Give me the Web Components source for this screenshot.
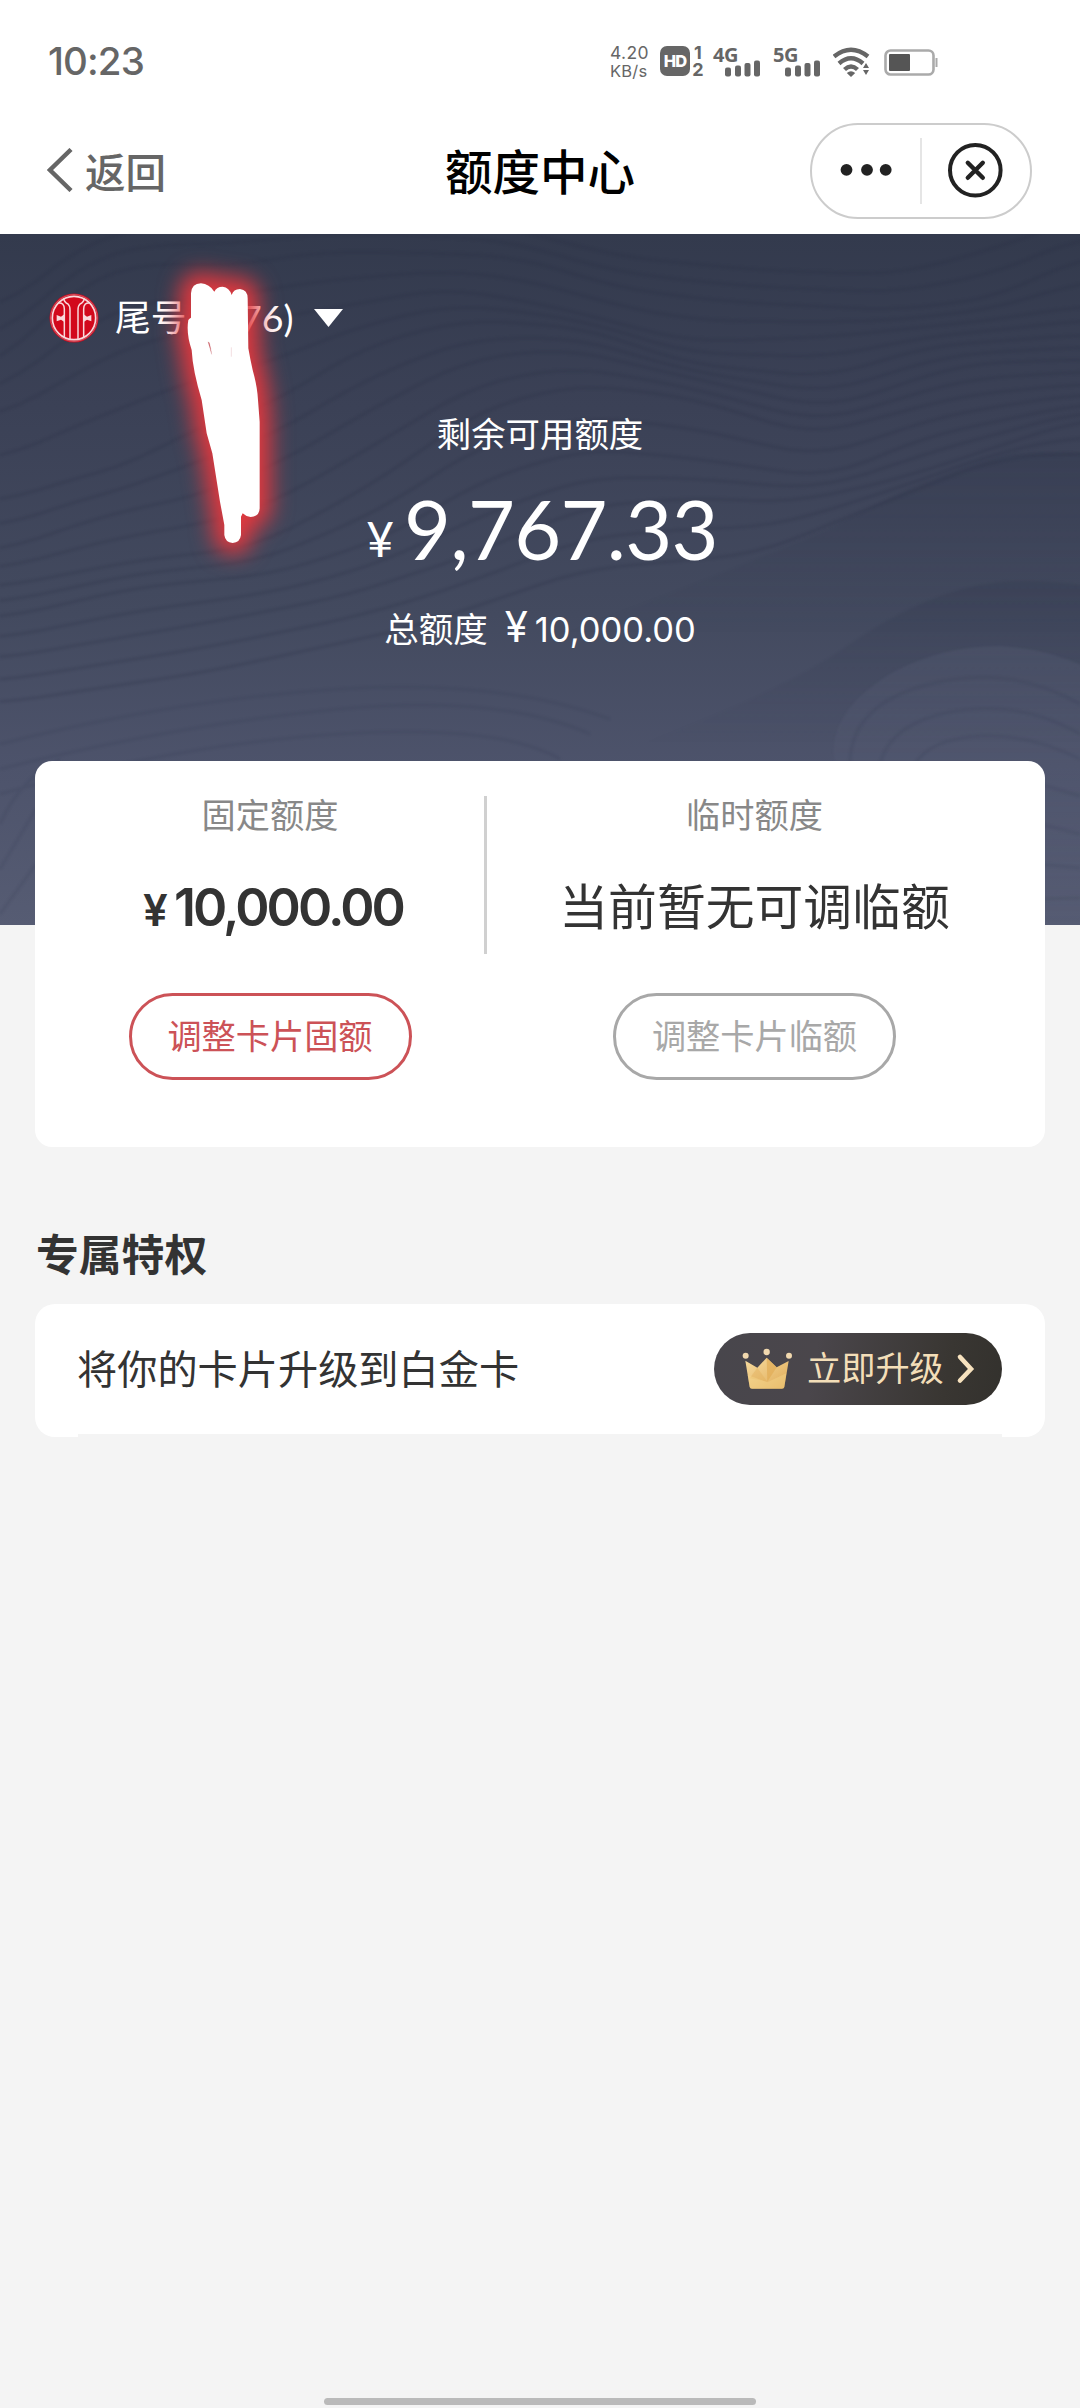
<!DOCTYPE html>
<html lang="zh-CN">
<head>
<meta charset="utf-8">
<meta name="viewport" content="width=device-width">
<title>额度中心</title>
<style>
html,body{margin:0;padding:0}
body{width:1080px;height:2408px;overflow:hidden;background:#f4f4f4;font-family:Inter,"Noto Sans CJK SC",sans-serif;color:#333}
</style>
</head>
<body>
<credit-page></credit-page>
<script>
const define=(name,html,setup)=>customElements.define(name,class extends HTMLElement{
  constructor(){super();this.attachShadow({mode:'open'}).innerHTML=html;}
  connectedCallback(){if(setup)setup(this.shadowRoot,this);}
});

define('signal-bars',`<style>
:host{display:block;width:48px;height:32px}
.g{font:700 20px/18px "Noto Sans",sans-serif;letter-spacing:-.5px;height:16px;color:#666}
svg{display:block;margin-left:12px;margin-top:-2px}
</style><div class="g"><slot></slot></div>
<svg width="36" height="17"><g fill="#666"><rect x="0" y="7.500" width="6" height="9" rx="2"/><rect x="10" y="5.500" width="6" height="11" rx="2"/><rect x="19.500" y="3" width="6" height="13.500" rx="2"/><rect x="29" y=".5" width="6" height="16" rx="2"/></g></svg>`);

define('status-bar',`<style>
:host{display:flex;height:108px;align-items:flex-start;color:#666;box-sizing:border-box;padding:44px 0 0 48px}
.time{font:500 38.500px/34px Inter;letter-spacing:-.9px;width:562px}
.rate{width:50px;font:400 17.500px/18px Inter}
.rate span{display:block;white-space:nowrap}
.rate .a{letter-spacing:.35px}.rate .b{font-size:16.500px;letter-spacing:.2px}
.hd{width:30px;height:30px;border-radius:7px;background:#666;color:#fff;font:800 16.500px/30px Inter;text-align:center;margin-top:2px;letter-spacing:-.8px}
.sim{width:12px;margin:0 9px 0 2px;font:700 18px/17px Inter;text-align:center}
signal-bars{margin-right:12px;margin-top:2px}
.wifi{margin-top:3px}
.bat{margin:5px 0 0 13px}
</style>
<div class="time">10:23</div>
<div class="rate"><span class="a">4.20</span><span class="b">KB/s</span></div>
<div class="hd">HD</div><div class="sim">1<br>2</div>
<signal-bars>4G</signal-bars><signal-bars>5G</signal-bars>
<svg class="wifi" width="38" height="30" viewBox="0 0 38 30"><g fill="none" stroke="#666" stroke-width="4.400"><path d="M1 9.500Q18 -4 35 9.500"/><path d="M6 16.500Q18 6 30 16.500"/><path d="M11.500 22.500Q18 16.500 24.500 22.500"/></g><path fill="#666" d="M13.800 26Q18 22.500 22.200 26L18 30zM30 21l3-5 3 5zM30 23h6l-3 5z"/></svg>
<svg class="bat" width="55" height="27" viewBox="0 0 55 27"><rect x="1.500" y="1.500" width="48" height="24" rx="5" fill="none" stroke="#aaa" stroke-width="2.600"/><rect x="5" y="5" width="21" height="17" rx="1" fill="#555"/><path d="M52.500 9v9" stroke="#aaa" stroke-width="2"/></svg>`);

define('nav-bar',`<style>
:host{display:grid;grid-template-columns:1fr auto 1fr;height:126px;align-items:start}
.back{display:flex;align-items:center;height:50px;padding:37px 0 0 47px;font-size:40.500px;line-height:50px;color:#666;font-weight:500}
.back svg{margin-right:12px}
.back span{margin-top:7px}
h1{margin:37px 0 0;font-size:47.500px;line-height:56px;font-weight:500;color:#000}
.cap{justify-self:end;box-sizing:border-box;width:222px;height:96px;border:2px solid #ccc;border-radius:48px;margin:15px 48px 0 0}
</style>
<div class="back"><svg width="26" height="44" viewBox="0 0 26 44"><path d="M24 1.500L3 22 24 42.500" fill="none" stroke="#666" stroke-width="4.400"/></svg><span>返回</span></div>
<h1>额度中心</h1>
<div class="cap"><svg width="218" height="92" viewBox="812 125 218 92"><g fill="#222"><circle cx="846.500" cy="169.800" r="5.900"/><circle cx="867" cy="169.800" r="5.900"/><circle cx="885.700" cy="169.800" r="5.900"/></g><path d="M921 138v66" stroke="#e5e5e5" stroke-width="2"/><circle cx="975.300" cy="170.300" r="25.300" fill="none" stroke="#222" stroke-width="4"/><path d="M967.800 162.800l15 15m0-15l-15 15" stroke="#222" stroke-width="4.400" stroke-linecap="round"/></svg></div>`);

// Contour texture: rows of [x,y] knots; extra contours are interpolated between neighbours.
const contours=[
 [[0,180],[130,20],[230,-10],[450,-30],[700,-20],[900,60],[1100,90],[1300,100],[1450,40],[1568,-30]],
 [[0,310],[60,200],[130,110],[200,75],[350,80],[450,50],[600,50],[750,60],[900,130],[1050,160],[1300,180],[1450,150],[1568,60]],
 [[0,420],[100,330],[200,250],[350,210],[500,170],[650,130],[800,170],[1000,250],[1200,240],[1450,200],[1568,170]],
 [[0,610],[100,560],[200,520],[270,450],[400,390],[450,330],[550,250],[680,200],[850,220],[1000,300],[1200,330],[1350,260],[1568,235]],
 [[0,720],[150,640],[300,590],[420,510],[540,400],[680,290],[820,265],[1000,330],[1200,400],[1400,300],[1568,290]],
 [[0,800],[200,740],[370,710],[530,580],[700,400],[840,345],[1000,375],[1180,460],[1400,370],[1568,345]],
 [[0,870],[200,800],[400,770],[560,690],[700,560],[850,490],[1000,510],[1200,555],[1350,460],[1568,390]],
 [[0,960],[300,880],[500,820],[680,730],[850,620],[1000,600],[1150,610],[1300,560],[1568,425]],
 [[0,1060],[300,990],[600,890],[850,760],[1100,725],[1300,600],[1450,510],[1568,500]]
];
const at=(k,x)=>{let i=1;while(i<k.length-1&&k[i][0]<x)i++;const[a,b]=[k[i-1],k[i]];return a[1]+(b[1]-a[1])*(x-a[0])/(b[0]-a[0]);};
const row=k=>{const r=[];for(let x=0;x<=1596;x+=28){let s=0;for(let d=-3;d<=3;d++)s+=at(k,Math.min(1568,Math.max(0,x+d*18)));r.push(s/7);}return r;};
const line=r=>'M'+r.map((y,i)=>(i*28/1.452).toFixed(1)+' '+(y/2.24-4).toFixed(1)).join('L');

define('contour-field',`<style>:host{display:block;position:absolute;inset:0}svg{display:block}</style>
<svg width="1080" height="691"><defs>
<filter id="f" x="-5%" y="-5%" width="110%" height="110%" color-interpolation-filters="sRGB"><feGaussianBlur stdDeviation="1.300"/></filter>
<linearGradient id="s" x1="0" y1="0" x2="0" y2="1"><stop offset="0" stop-color="#2c3348" stop-opacity=".2"/><stop offset="1" stop-color="#2c3348" stop-opacity="0"/></linearGradient>
<linearGradient id="k" x1="0" y1="0" x2="0" y2="1"><stop offset="0" stop-color="#666c84" stop-opacity=".2"/><stop offset="1" stop-color="#666c84" stop-opacity="0"/></linearGradient></defs>
<path filter="url(#f)" fill="url(#s)" d="M560 400Q700 350 830 295Q930 240 1000 222Q1040 215 1090 220V400Z"/>
<path filter="url(#f)" fill="url(#s)" d="M640 510Q780 460 850 410Q930 355 1000 348Q1040 345 1090 352V510Z"/>
<g id="l" filter="url(#f)" fill="none" stroke="#252c40" stroke-opacity=".18" stroke-width="3.400"></g>
<path filter="url(#f)" fill="url(#k)" d="M835 530Q825 480 890 440Q940 412 1000 412Q1050 415 1090 435V691H960Z"/>
<g filter="url(#f)" fill="none" stroke="#2b3248" stroke-opacity=".12" stroke-width="3"><path d="M850 530Q850 470 930 450Q1010 430 1080 470M880 530Q890 490 950 478Q1020 465 1080 500M915 530Q930 505 980 502Q1030 500 1080 525M1040 550L1080 562M1040 590L1080 600M1040 630L1080 634M1040 665L1080 664M0 510Q180 465 340 455T610 485M0 535Q180 490 340 475T590 500M0 560Q180 510 340 500T560 525M0 590Q20 545 60 525M0 635L36 575M0 680L36 630"/></g>
</svg>`,root=>{
  const g=root.getElementById('l'),rows=contours.map(row);let d='';
  rows.forEach((r,i)=>{d+=line(r);const n=rows[i+1];if(n)d+=line(r.map((y,j)=>y+(n[j]-y)*.5));});
  g.innerHTML='<path d="'+d+'"/>';
});

define('bank-logo',`<style>:host{display:block;width:50px;height:50px}svg{display:block}</style>
<svg width="50" height="50" viewBox="86 160 150 150"><circle cx="161" cy="235" r="73.500" fill="#c60b1e"/><circle cx="161" cy="235" r="70" fill="none" stroke="#eaa5ac" stroke-width="1.500"/><circle cx="161" cy="235" r="65" fill="#d2091c" stroke="#f9d9dc" stroke-width="5"/>
<g fill="none" stroke="#f9d9dc" stroke-width="4.500"><path d="M130 176Q132 188 143 193Q149 198 149 212V299M192 176Q190 188 179 193Q173 198 173 212V299"/><path d="M114 190Q132 188 132 208V293M208 190Q190 188 190 208V293"/></g><path d="M132 224L122 231 109 226V245L122 240 132 247ZM190 224L200 231 213 226V245L200 240 190 247Z" fill="#f9d9dc"/></svg>`);

define('ink-stroke',`<style>:host{display:block;position:absolute;left:0;top:0}svg{display:block}</style>
<svg width="420" height="400"><defs><filter id="b" x="-100%" y="-30%" width="300%" height="160%" color-interpolation-filters="sRGB"><feGaussianBlur stdDeviation="32"/></filter>
<path id="p" d="M513 160Q515 130 543 130Q568 132 583 155Q590 140 608 140Q628 142 635 165Q640 147 660 147Q683 150 683 175L685 325Q691 360 698 390Q712 440 714 480L719 545V805Q718 830 692 831Q678 830 668 820L663 830V885Q660 908 638 909Q616 908 613 885V855L600 785L577 640L560 580L545 480Q518 390 515 330Q498 280 505 240Q508 235 513 233Z"/></defs>
<g transform="translate(20 6) scale(.33333)"><use href="#p" fill="#e0383e" stroke="#e0383e" stroke-width="68" stroke-linejoin="round" filter="url(#b)"/><use href="#p" fill="#fff"/><path d="M564 305Q570 324 575 343Q572 322 568 308M634 322V350" fill="#c33a41" stroke="#d99ca0" stroke-width="1"/></g></svg>`);

define('quota-hero',`<style>
:host{display:block;position:relative;height:691px;margin-bottom:-164px;color:#fff;background:linear-gradient(#333a4d,#3b4156 25%,#434a5f 55%,#4d536b 77%,#565c73)}
.in{position:relative;display:flex;flex-direction:column;align-items:center}
.acct{display:flex;align-self:stretch;align-items:center;height:50px;padding:59px 0 0 49px;font:400 35.800px/50px Lato,"Noto Sans CJK SC",sans-serif}
.acct bank-logo{margin-right:16px}
.acct .n{margin-left:33px;width:74px;font:400 37.500px/50px Lato;text-align:right;margin-right:20px}
.lab{font-size:34.400px;line-height:50px;margin-top:67px}
.amt{display:flex;align-items:baseline;margin-top:25px;padding-left:4px;height:88px;line-height:88px;font-family:Lato}
.amt .y{font-size:48px;margin-right:10px;align-self:center;line-height:50px;margin-top:20px}.amt .v{font-size:81px;letter-spacing:-.7px}
.tot{display:flex;align-items:baseline;font-size:34.500px;line-height:50px;margin-top:32px}
.tot .y{font-size:42px;margin:0 7px 0 17px;line-height:40px}
.tot .v{letter-spacing:0}
</style>
<contour-field></contour-field>
<div class="in">
<div class="acct"><bank-logo></bank-logo><span>尾号</span><span class="n">76)</span><svg width="29" height="18"><path d="M0 0H29L14.500 18Z" fill="#fff"/></svg></div>
<div class="lab">剩余可用额度</div>
<div class="amt"><span class="y">¥</span><span class="v">9,767.33</span></div>
<div class="tot"><span>总额度</span><span class="y">¥</span><span class="v">10,000.00</span></div>
</div>
<ink-stroke></ink-stroke>`);

define('pill-button',`<style>
:host{display:block;box-sizing:border-box;width:283px;height:87px;border:3px solid currentColor;border-radius:44px;color:#cc5257;font-size:34.200px;line-height:82px;text-align:center}
:host([disabled]){color:#a8a8a8}
</style><slot></slot>`);

define('quota-column',`<style>
:host{display:flex;flex-direction:column;align-items:center}
.l{font-size:34.200px;line-height:50px;color:#888;margin-top:30px}
.v{margin-top:31px;height:72px;line-height:72px;font-size:48.800px;color:#333;white-space:nowrap}
</style><div class="l"><slot name="label"></slot></div><div class="v"><slot name="value"></slot></div><slot name="action"></slot>`);

define('quota-card',`<style>
:host{position:relative;display:flex;height:386px;margin:0 35px;border-radius:17px;background:#fff}
.a{width:449px;padding-left:21px;box-sizing:border-box}
hr{margin:35px 0 0;border:0;width:3px;height:158px;background:#d0d0d0}
.b{flex:1;padding-right:23px}
.m{font-weight:600;font-size:52px;letter-spacing:-2.900px;padding-left:6px}
.m i{font-style:normal;font-size:44px;margin-right:9px}
pill-button{margin-top:49px}
</style>
<quota-column class="a"><span slot="label">固定额度</span><span slot="value" class="m"><i>¥</i>10,000.00</span><pill-button slot="action">调整卡片固额</pill-button></quota-column>
<hr>
<quota-column class="b"><span slot="label">临时额度</span><span slot="value">当前暂无可调临额</span><pill-button slot="action" disabled>调整卡片临额</pill-button></quota-column>`);

define('upgrade-button',`<style>
:host{display:flex;align-items:center;box-sizing:border-box;width:288px;height:72px;border-radius:36px;padding-left:28px;background:linear-gradient(100deg,#48464c,#4a464b 35%,#393632 80%,#33312d);color:#f3deb8;font-size:34.200px;line-height:72px}
.t{margin:0 12px 0 14px}
</style><svg width="51" height="42" viewBox="186 139 153 126"><defs><linearGradient id="g" x1="0" y1="0" x2="1" y2="1"><stop offset="0" stop-color="#f7dca0"/><stop offset="1" stop-color="#dfaa55"/></linearGradient></defs><path fill="url(#g)" d="M196 177L232 198 260 168 290 197 326 178 313 256Q312 261 306 261H216Q210 261 209 256Z"/><path d="M260 168L290 197 262 240Z" fill="#dfa950" opacity=".6"/><path d="M232 198L262 240 209 230Z" fill="#e0ad58" opacity=".4"/><path d="M203 220L262 242 319 215 313 256Q312 261 306 261H216Q210 261 209 256Z" fill="#f7d98f" opacity=".4"/><g fill="#f1d8ae"><circle cx="197" cy="162" r="9"/><circle cx="260" cy="151" r="9.500"/><circle cx="327" cy="162" r="9"/></g></svg><span class="t"><slot></slot></span><svg width="20" height="32" viewBox="0 0 20 32"><path d="M4 4L15 16 4 27.500" fill="none" stroke="#f7e2be" stroke-width="4.600" stroke-linecap="round"/></svg>`);

define('privilege-section',`<style>
:host{display:block;margin:79px 35px 0}
h2{margin:0 0 0 1px;font-size:42.800px;line-height:60px;height:78px;font-weight:700;color:#333}
.c{display:flex;flex-direction:column;height:133px;border-radius:20px;background:#fff;padding:0 43px}
.r{display:flex;height:130px;align-items:center;justify-content:space-between;font-size:40.200px}
.r span{margin-top:-6px;margin-left:-1px}
.u{height:3px;background:#f4f4f4}
</style><h2>专属特权</h2><div class="c"><div class="r"><span>将你的卡片升级到白金卡</span><upgrade-button>立即升级</upgrade-button></div><div class="u"></div></div>`);

define('credit-page',`<style>
:host{display:flex;flex-direction:column;width:1080px;height:2408px;background:#f4f4f4}
.top{background:#fff}
.home{width:432px;height:7px;border-radius:4px;background:#bababa;margin:auto auto 3px}
</style><div class="top"><status-bar></status-bar><nav-bar></nav-bar></div><quota-hero></quota-hero><quota-card></quota-card><privilege-section></privilege-section><div class="home"></div>`);
</script>
</body>
</html>
